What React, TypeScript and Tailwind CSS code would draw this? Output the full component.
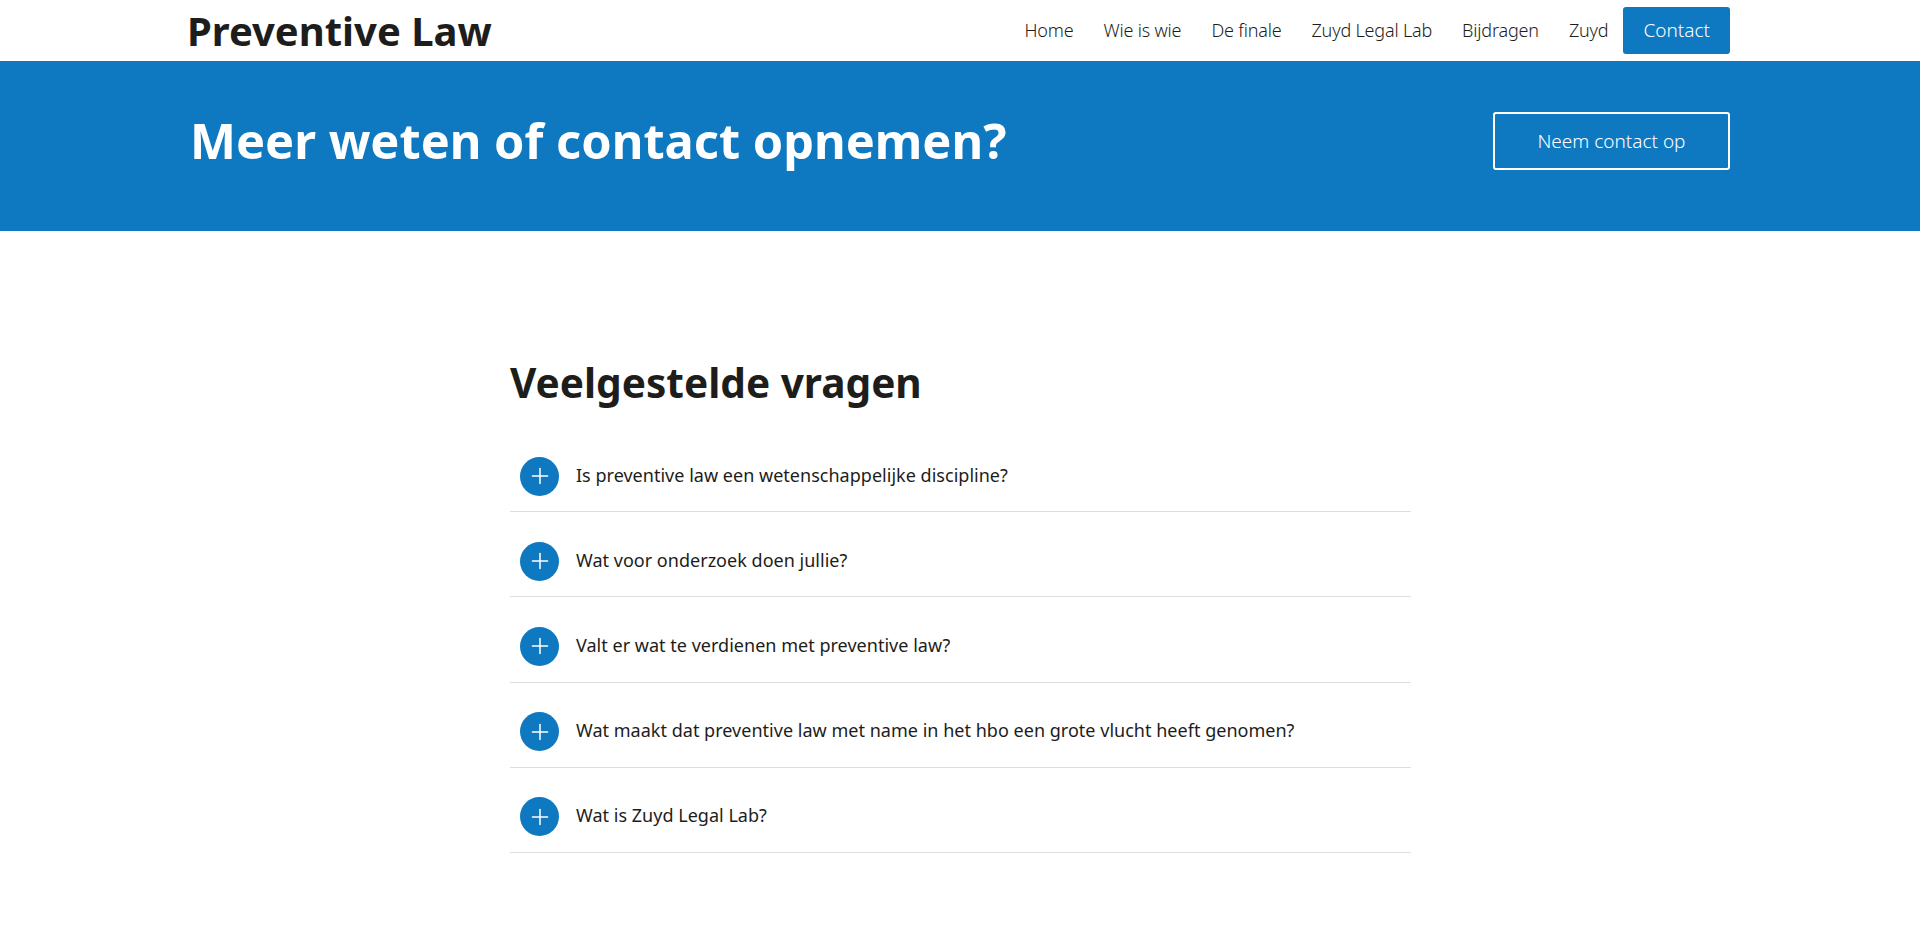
import { Plus } from "lucide-react";

const navItems = ["Home", "Wie is wie", "De finale", "Zuyd Legal Lab", "Bijdragen", "Zuyd"];

const questions = [
  "Is preventive law een wetenschappelijke discipline?",
  "Wat voor onderzoek doen jullie?",
  "Valt er wat te verdienen met preventive law?",
  "Wat maakt dat preventive law met name in het hbo een grote vlucht heeft genomen?",
  "Wat is Zuyd Legal Lab?",
];

const Question = ({ text }: { text: string }) => (
  <div className="flex items-center h-[85.2px] pt-[14px] pl-[10px] border-b border-[#dedede]">
    <span className="flex justify-center items-center w-[39px] h-[39px] rounded-full bg-[#0e79c1] text-white">
      <Plus size={26} strokeWidth={1.4} />
    </span>
    <p className="ml-[17px] mb-[2px] text-[18px] tracking-[0.02px] text-[#1d1d1b]">{text}</p>
  </div>
);

export default function App() {
  return (
    <div className="min-h-[947px] bg-white font-['Noto_Sans',sans-serif] text-[#1d1d1b]">
      <header className="flex justify-between items-center h-[61px] pl-[187px] pr-[190px]">
        <a className="text-[40px] font-bold leading-none">Preventive Law</a>
        <nav className="flex items-center">
          {navItems.map((item) => (
            <a key={item} className="px-[15px] text-[18px] tracking-[-0.18px] font-light whitespace-nowrap">
              {item}
            </a>
          ))}
          <a className="flex items-center h-[47px] px-[20px] rounded-[3px] bg-[#0e79c1] text-white text-[19px] font-light">
            Contact
          </a>
        </nav>
      </header>

      <section className="flex justify-between items-center h-[170px] pb-[10px] pl-[190px] pr-[190px] bg-[#0e79c1] text-white">
        <h1 className="text-[48.75px] font-bold">Meer weten of contact opnemen?</h1>
        <a className="flex justify-center items-center w-[237px] h-[58px] border-2 border-white rounded-[3px] text-[19px] font-light">
          Neem contact op
        </a>
      </section>

      <main className="w-[901px] ml-[510px] pt-[125px]">
        <h2 className="text-[40.6px] font-bold leading-[54px]">Veelgestelde vragen</h2>
        <div className="mt-[17px]">
          {questions.map((q) => (
            <Question key={q} text={q} />
          ))}
        </div>
      </main>
    </div>
  );
}
